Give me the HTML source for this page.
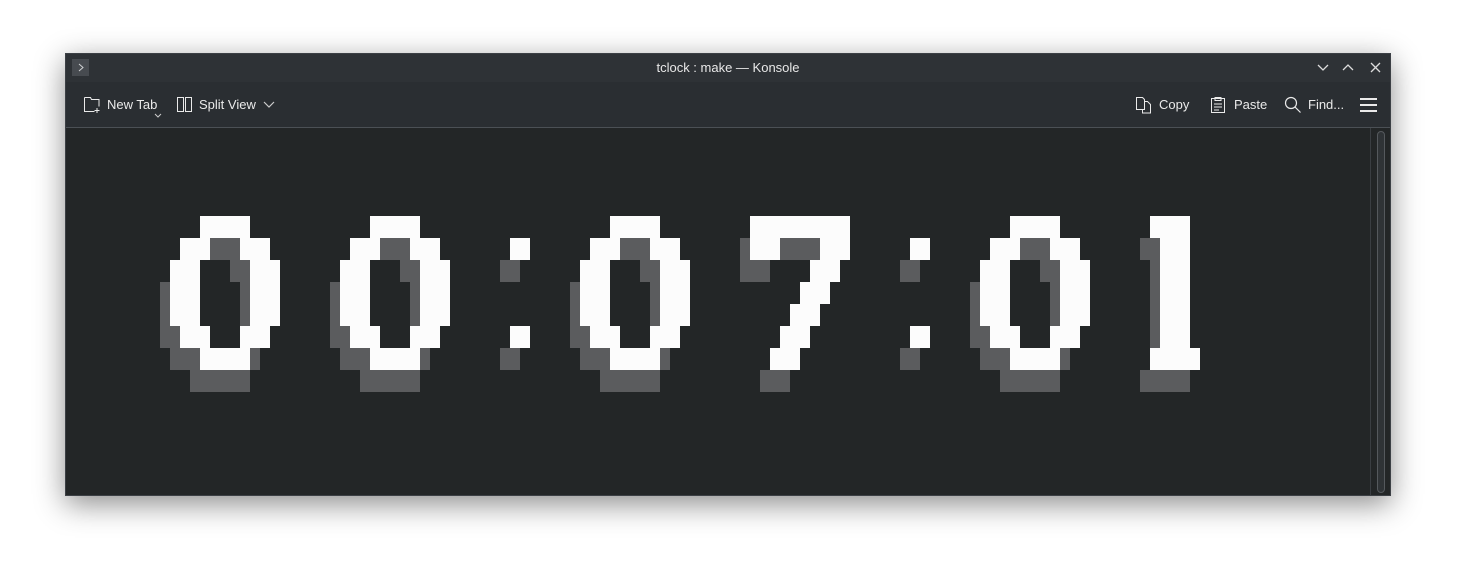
<!DOCTYPE html>
<html><head><meta charset="utf-8"><style>
body{margin:0;width:1458px;height:575px;background:#fff;overflow:hidden;font-family:"Liberation Sans",sans-serif}
.win{position:absolute;left:65px;top:53px;width:1326px;height:443px;background:#232627;box-shadow:0 8px 28px rgba(0,0,0,.45);border:1px solid #3c4045;box-sizing:border-box}
.title{position:absolute;left:0;top:0;width:100%;height:28px;background:#2e3236;color:#e8e8e8;font-size:13px;text-align:center;line-height:28px}
.tb{position:absolute;left:0;top:28px;width:100%;height:45px;background:#2a2e32;border-bottom:1px solid #4b5055;color:#eaeaea;font-size:13px}
.tb span{position:absolute;top:15px}
</style></head><body>
<div class="win">
<div class="title">tclock : make — Konsole</div>
<svg style="position:absolute;left:6px;top:5px" width="17" height="17"><rect width="17" height="17" fill="#474b50"/><path d="M7 5l4 3.5-4 3.5" stroke="#cfd1d3" fill="none"/></svg>
<svg style="position:absolute;left:1250px;top:6px" width="70" height="16" stroke="#dcdcdc" fill="none" stroke-width="1.3"><path d="M2 5l5 5 5-5"/><path d="M27 10l5-5 5 5"/><path d="M55 3l9 9M64 3l-9 9"/></svg>
<div class="tb">
<svg style="position:absolute;left:17px;top:14px" width="20" height="18" stroke="#eaeaea" fill="none"><path d="M1.5 1.5h6l1 2h7.5v7M1.5 1.5v14h10"/><path d="M14 12v5M11.5 14.5h5"/></svg>
<span style="left:41px">New Tab</span>
<svg style="position:absolute;left:88px;top:31px" width="8" height="5" stroke="#ccc" fill="none"><path d="M1 1l3 3 3-3"/></svg>
<svg style="position:absolute;left:110px;top:14px" width="18" height="17" stroke="#eaeaea" fill="none"><rect x="1.5" y="1.5" width="6" height="14"/><rect x="9.5" y="1.5" width="6" height="14"/></svg>
<span style="left:133px">Split View</span>
<svg style="position:absolute;left:197px;top:19px" width="12" height="8" stroke="#ccc" fill="none" stroke-width="1.2"><path d="M1 1l5 5 5-5"/></svg>
<svg style="position:absolute;left:1069px;top:14px" width="17" height="18" stroke="#eaeaea" fill="none"><path d="M1.5 1.5h6l2 2v10h-8z"/><path d="M9.5 5.5h3l3 3v8.5h-8v-3.5"/></svg>
<span style="left:1093px">Copy</span>
<svg style="position:absolute;left:1144px;top:14px" width="16" height="18" stroke="#eaeaea" fill="none"><rect x="1.5" y="2.5" width="13" height="14"/><path d="M5 1.5h6v3H5zM4 8h8M4 11h8M4 14h5"/></svg>
<span style="left:1168px">Paste</span>
<svg style="position:absolute;left:1218px;top:14px" width="18" height="18" stroke="#eaeaea" fill="none" stroke-width="1.2"><circle cx="7" cy="7" r="5.5"/><path d="M11 11l5.5 5.5"/></svg>
<span style="left:1242px">Find...</span>
<svg style="position:absolute;left:1294px;top:16px" width="17" height="14" fill="#eaeaea"><rect y="0" width="17" height="2"/><rect y="6" width="17" height="2"/><rect y="12" width="17" height="2"/></svg>
</div>
<div style="position:absolute;left:1304px;top:74px;width:1px;height:368px;background:#3a3e42"></div>
<div style="position:absolute;left:1311px;top:77px;width:8px;height:362px;border-radius:4px;background:#2f3336;border:1px solid #55595d;box-sizing:border-box"></div>
</div>
<svg style="position:absolute;left:0;top:0" width="1458" height="575">
<defs>
<g id="z"><rect x="30" y="0" width="50" height="22"/><rect x="10" y="22" width="30" height="22"/><rect x="70" y="22" width="30" height="22"/><rect x="0" y="44" width="30" height="66"/><rect x="80" y="44" width="30" height="66"/><rect x="10" y="110" width="30" height="22"/><rect x="70" y="110" width="30" height="22"/><rect x="30" y="132" width="50" height="22"/></g>
<g id="zs"><use href="#z"/><rect x="30" y="132" width="60" height="22"/></g>
<g id="s"><rect x="0" y="0" width="100" height="22"/><rect x="0" y="22" width="30" height="22"/><rect x="70" y="22" width="30" height="22"/><rect x="60" y="44" width="30" height="22"/><rect x="50" y="66" width="30" height="22"/><rect x="40" y="88" width="30" height="22"/><rect x="30" y="110" width="30" height="22"/><rect x="20" y="132" width="30" height="22"/></g>
<g id="o"><rect x="0" y="0" width="40" height="22"/><rect x="10" y="22" width="30" height="110"/><rect x="0" y="132" width="50" height="22"/></g>
<g id="c"><rect x="0" y="22" width="20" height="22"/><rect x="0" y="110" width="20" height="22"/></g>
<g id="all"><use href="#z" x="170"/><use href="#z" x="340"/><use href="#c" x="510"/><use href="#z" x="580"/><use href="#s" x="750"/><use href="#c" x="910"/><use href="#z" x="980"/><use href="#o" x="1150"/></g>
<g id="sh"><use href="#zs" x="170"/><use href="#zs" x="340"/><use href="#c" x="510"/><use href="#zs" x="580"/><use href="#s" x="750"/><use href="#c" x="910"/><use href="#zs" x="980"/><use href="#o" x="1150"/></g>
</defs>
<use href="#sh" x="-10" y="238" fill="#5b5c5e"/>
<use href="#all" x="0" y="216" fill="#fcfcfc"/>
</svg>
</body></html>
